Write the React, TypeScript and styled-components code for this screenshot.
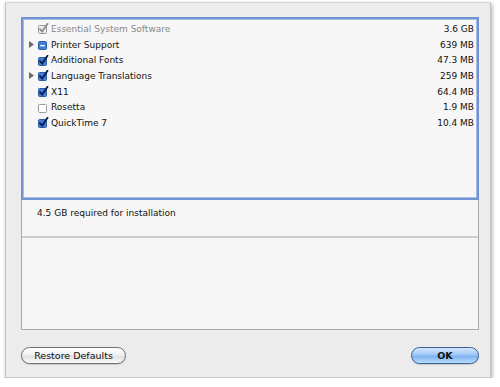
import styled, { createGlobalStyle } from "styled-components";

type Item = {
  name: string;
  size: string;
  state: "on" | "off" | "mixed";
  disabled?: boolean;
  expandable?: boolean;
};

const items: Item[] = [
  { name: "Essential System Software", size: "3.6 GB", state: "on", disabled: true },
  { name: "Printer Support", size: "639 MB", state: "mixed", expandable: true },
  { name: "Additional Fonts", size: "47.3 MB", state: "on" },
  { name: "Language Translations", size: "259 MB", state: "on", expandable: true },
  { name: "X11", size: "64.4 MB", state: "on" },
  { name: "Rosetta", size: "1.9 MB", state: "off" },
  { name: "QuickTime 7", size: "10.4 MB", state: "on" },
];

const Global = createGlobalStyle`
  body {
    margin: 0;
    background: #ffffff;
    font-family: "DejaVu Sans", "Liberation Sans", sans-serif;
    font-size: 9px;
    color: #111;
  }
`;

const Sheet = styled.div`
  margin: 2px 0 0 5px;
  width: 486px;
  height: 376px;
  box-sizing: border-box;
  background: #ececec;
  border: 1px solid #c4c4c4;
  border-top-color: #d6d6d6;
  box-shadow: 1px 2px 4px rgba(0, 0, 0, 0.35);
  padding: 14px 11px 0 15px;
  display: flex;
  flex-direction: column;
`;

const Panel = styled.div`
  height: 313px;
  box-sizing: border-box;
  border: 1px solid #a9a9a9;
  border-top: none;
  background: #f6f6f6;
  display: flex;
  flex-direction: column;
`;

const List = styled.div`
  height: 183px;
  box-sizing: border-box;
  margin: 0 -1px;
  border: 2px solid #6f93d3;
  box-shadow: inset 0 0 0 1px #a9bde4;
  background: #f7f7f7;
  padding: 2px 3px 0 6px;
`;

const Row = styled.div`
  height: 15.7px;
  display: flex;
  align-items: center;
  color: #111;
`;

const Disclosure = styled.span`
  width: 9px;
  display: flex;
  align-items: center;
`;

const Name = styled.span<{ $disabled?: boolean }>`
  flex: 1;
  margin-left: 1px;
  color: ${(p) => (p.$disabled ? "#8a8a8a" : "#111")};
`;

const Size = styled.span`
  text-align: right;
`;

const Info = styled.div`
  height: 38px;
  box-sizing: border-box;
  border-bottom: 2px solid #cdcdcd;
  padding-top: 8px;
  padding-left: 15px;
`;

const Description = styled.div`
  flex: 1;
`;

const Buttons = styled.div`
  margin-top: 17px;
  display: flex;
  justify-content: space-between;
`;

const Button = styled.button<{ $primary?: boolean }>`
  height: 17px;
  box-sizing: border-box;
  border-radius: 9px;
  border: 1px solid ${(p) => (p.$primary ? "#3d5f95" : "#6e6e6e")};
  padding: 0;
  font-family: "DejaVu Sans", "Liberation Sans", sans-serif;
  font-size: 9.5px;
  color: #111;
  width: ${(p) => (p.$primary ? "68px" : "105px")};
  font-weight: ${(p) => (p.$primary ? 700 : 400)};
  background: ${(p) =>
    p.$primary
      ? "linear-gradient(#d3e7fd 0%, #9fc8f5 45%, #7cb3f0 55%, #b8defd 100%)"
      : "linear-gradient(#ffffff 0%, #f0f0f0 45%, #e2e2e2 55%, #fafafa 100%)"};
  box-shadow: 0 1px 1px rgba(0, 0, 0, 0.15);
`;

function Check({ state, disabled }: { state: Item["state"]; disabled?: boolean }) {
  const fill = state === "off" ? "#ffffff" : disabled ? "#eeeeee" : "#3f7fd8";
  const stroke = state === "off" || disabled ? "#9a9a9a" : "#2d5ba6";
  return (
    <svg width="12" height="11" viewBox="0 0 12 11">
      <rect x="0.5" y="2.5" width="8" height="8" rx="1" fill={fill} stroke={stroke} />
      {state === "on" && (
        <path
          d="M2 6.2 L4.2 8.6 L9.5 0.8"
          fill="none"
          stroke={disabled ? "#8c8c8c" : "#0b1d3f"}
          strokeWidth="1.8"
          strokeLinecap="round"
        />
      )}
      {state === "mixed" && <rect x="2.2" y="6" width="4.6" height="1.3" fill="#ffffff" />}
    </svg>
  );
}

export default function App() {
  return (
    <>
      <Global />
      <Sheet>
        <Panel>
          <List>
            {items.map((it) => (
              <Row key={it.name}>
                <Disclosure>
                  {it.expandable && (
                    <svg width="5" height="7" viewBox="0 0 5 7">
                      <path d="M0 0 L5 3.5 L0 7 Z" fill="#6b6b6b" />
                    </svg>
                  )}
                </Disclosure>
                <Check state={it.state} disabled={it.disabled} />
                <Name $disabled={it.disabled}>{it.name}</Name>
                <Size>{it.size}</Size>
              </Row>
            ))}
          </List>
          <Info>4.5 GB required for installation</Info>
          <Description />
        </Panel>
        <Buttons>
          <Button>Restore Defaults</Button>
          <Button $primary>OK</Button>
        </Buttons>
      </Sheet>
    </>
  );
}
